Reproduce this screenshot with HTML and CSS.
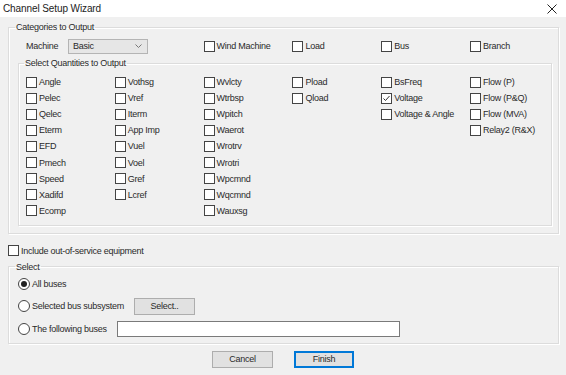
FILE: index.html
```html
<!DOCTYPE html>
<html lang="en">
<head>
    <meta charset="UTF-8">
    <title>Channel Setup Wizard</title>
    <link rel="stylesheet" href="styles.css">
</head>
<body>
    <div class="titlebar">
        <span class="title">Channel Setup Wizard</span>
        <svg class="close" width="10" height="10" viewBox="0 0 10 10">
            <path d="M0.5 0.5 L9.5 9.5 M9.5 0.5 L0.5 9.5" stroke="#222" stroke-width="1" fill="none"/>
        </svg>
    </div>

    <div class="content">
        <fieldset class="group outer">
            <legend>Categories to Output</legend>
            <div class="category-row">
                <div class="machine">
                    <span class="machine-label">Machine</span>
                    <div class="dropdown">
                        <span>Basic</span>
                        <svg width="7" height="4" viewBox="0 0 7 4"><path d="M0.5 0.5 L3.5 3.5 L6.5 0.5" stroke="#777" fill="none"/></svg>
                    </div>
                </div>
                <label class="check"><span class="box"></span>Wind Machine</label>
                <label class="check"><span class="box"></span>Load</label>
                <label class="check"><span class="box"></span>Bus</label>
                <label class="check"><span class="box"></span>Branch</label>
            </div>

            <fieldset class="group inner">
                <legend>Select Quantities to Output</legend>
                <div class="qty-grid">
                    <div class="qty-col">
                        <label class="check"><span class="box"></span>Angle</label>
                        <label class="check"><span class="box"></span>Pelec</label>
                        <label class="check"><span class="box"></span>Qelec</label>
                        <label class="check"><span class="box"></span>Eterm</label>
                        <label class="check"><span class="box"></span>EFD</label>
                        <label class="check"><span class="box"></span>Pmech</label>
                        <label class="check"><span class="box"></span>Speed</label>
                        <label class="check"><span class="box"></span>Xadifd</label>
                        <label class="check"><span class="box"></span>Ecomp</label>
                    </div>
                    <div class="qty-col">
                        <label class="check"><span class="box"></span>Vothsg</label>
                        <label class="check"><span class="box"></span>Vref</label>
                        <label class="check"><span class="box"></span>Iterm</label>
                        <label class="check"><span class="box"></span>App Imp</label>
                        <label class="check"><span class="box"></span>Vuel</label>
                        <label class="check"><span class="box"></span>Voel</label>
                        <label class="check"><span class="box"></span>Gref</label>
                        <label class="check"><span class="box"></span>Lcref</label>
                    </div>
                    <div class="qty-col">
                        <label class="check"><span class="box"></span>Wvlcty</label>
                        <label class="check"><span class="box"></span>Wtrbsp</label>
                        <label class="check"><span class="box"></span>Wpitch</label>
                        <label class="check"><span class="box"></span>Waerot</label>
                        <label class="check"><span class="box"></span>Wrotrv</label>
                        <label class="check"><span class="box"></span>Wrotri</label>
                        <label class="check"><span class="box"></span>Wpcmnd</label>
                        <label class="check"><span class="box"></span>Wqcmnd</label>
                        <label class="check"><span class="box"></span>Wauxsg</label>
                    </div>
                    <div class="qty-col">
                        <label class="check"><span class="box"></span>Pload</label>
                        <label class="check"><span class="box"></span>Qload</label>
                    </div>
                    <div class="qty-col">
                        <label class="check"><span class="box"></span>BsFreq</label>
                        <label class="check"><span class="box checked"><svg width="9" height="9" viewBox="0 0 9 9"><path d="M1.5 4.5 L3.5 6.5 L7.5 2" stroke="#333" fill="none"/></svg></span>Voltage</label>
                        <label class="check"><span class="box"></span>Voltage &amp; Angle</label>
                    </div>
                    <div class="qty-col">
                        <label class="check"><span class="box"></span>Flow (P)</label>
                        <label class="check"><span class="box"></span>Flow (P&amp;Q)</label>
                        <label class="check"><span class="box"></span>Flow (MVA)</label>
                        <label class="check"><span class="box"></span>Relay2 (R&amp;X)</label>
                    </div>
                </div>
            </fieldset>
        </fieldset>

        <label class="check include"><span class="box"></span>Include out-of-service equipment</label>

        <fieldset class="group select-group">
            <legend>Select</legend>
            <div class="radio-row">
                <label class="radio"><span class="dot checked"></span>All buses</label>
            </div>
            <div class="radio-row">
                <label class="radio subsystem"><span class="dot"></span>Selected bus subsystem</label>
                <button class="button select-button">Select..</button>
            </div>
            <div class="radio-row">
                <label class="radio following"><span class="dot"></span>The following buses</label>
                <input class="textbox" type="text">
            </div>
        </fieldset>

        <div class="actions">
            <button class="button cancel">Cancel</button>
            <button class="button default">Finish</button>
        </div>
    </div>
</body>
</html>
```

FILE: styles.css
```css
/* Base */
body {
    margin: 0;
    padding: 0;
    background: #f0f0f0;
    font-family: "Liberation Sans", Arial, sans-serif;
    font-size: 9px;
    letter-spacing: -0.25px;
    color: #2a2a2a;
}

.titlebar {
    height: 17px;
    background: #fff;
    display: flex;
    justify-content: space-between;
    align-items: center;
    padding: 0 9px 0 3px;
}

.title {
    font-size: 10px;
    letter-spacing: -0.1px;
    color: #222;
}

.content {
    padding: 0 7px 0 8px;
}

/* Group boxes */
.group {
    margin: 0;
    padding: 0;
    border: 1px solid #dcdcdc;
    box-shadow: inset 1px 1px 0 #fff, 1px 1px 0 #fff;
    min-width: 0;
}

.group legend {
    padding: 0 1px;
    margin-left: 6px;
    line-height: 12px;
}

.outer {
    margin-top: 4px;
}

.category-row {
    display: grid;
    grid-template-columns: repeat(6, 88.8px);
    margin: 5px 0 0 17px;
    height: 15px;
    align-items: center;
}

.machine {
    grid-column: span 2;
    display: flex;
    align-items: center;
}

.machine-label {
    width: 42px;
}

.dropdown {
    width: 80px;
    height: 15px;
    box-sizing: border-box;
    border: 1px solid #b4b4b4;
    background: #e6e6e6;
    display: flex;
    align-items: center;
    justify-content: space-between;
    padding: 0 5px 0 4px;
}

.inner {
    margin: 4px 6px 7px 9px;
    padding: 5px 0 6px 7px;
}

.inner legend {
    margin-left: -2px;
}

.qty-grid {
    display: grid;
    grid-template-columns: repeat(6, 88.8px);
}

.qty-col {
    display: flex;
    flex-direction: column;
}

/* Checkboxes */
.check {
    display: flex;
    align-items: center;
    gap: 2px;
    height: 16.1px;
    white-space: nowrap;
}

.box {
    width: 11px;
    height: 11px;
    box-sizing: border-box;
    border: 1px solid #444;
    background: #fff;
    display: flex;
    align-items: center;
    justify-content: center;
    flex-shrink: 0;
}

.include {
    margin-top: 9px;
    height: 16px;
}

/* Select group */
.select-group {
    margin-top: 2px;
    padding: 3px 0 5px 9px;
}

.select-group legend {
    margin-left: -3px;
}

.radio-row {
    display: flex;
    align-items: center;
    height: 16px;
}

.radio-row + .radio-row {
    margin-top: 6px;
    height: 17px;
}

.radio {
    display: flex;
    align-items: center;
    gap: 2px;
    white-space: nowrap;
}

.subsystem {
    width: 116px;
}

.following {
    width: 99px;
}

.dot {
    width: 12px;
    height: 12px;
    box-sizing: border-box;
    border: 1px solid #444;
    border-radius: 50%;
    background: #fff;
    display: flex;
    align-items: center;
    justify-content: center;
}

.dot.checked::after {
    content: '';
    width: 6px;
    height: 6px;
    border-radius: 50%;
    background: #222;
}

.textbox {
    width: 283px;
    height: 16px;
    box-sizing: border-box;
    margin: 0;
    border: 1px solid #7a7a7a;
    background: #fff;
    padding: 0;
}

/* Buttons */
.button {
    height: 17px;
    box-sizing: border-box;
    border: 1px solid #adadad;
    background: #e1e1e1;
    font-family: inherit;
    font-size: 9px;
    letter-spacing: -0.25px;
    color: #2a2a2a;
    padding: 0;
    margin: 0;
}

.select-button {
    width: 61px;
}

.actions {
    display: flex;
    justify-content: center;
    gap: 21px;
    margin-top: 7px;
    padding-right: 1px;
}

.cancel {
    width: 61px;
}

.default {
    width: 60px;
    border: 2px solid #0078d7;
}
```
